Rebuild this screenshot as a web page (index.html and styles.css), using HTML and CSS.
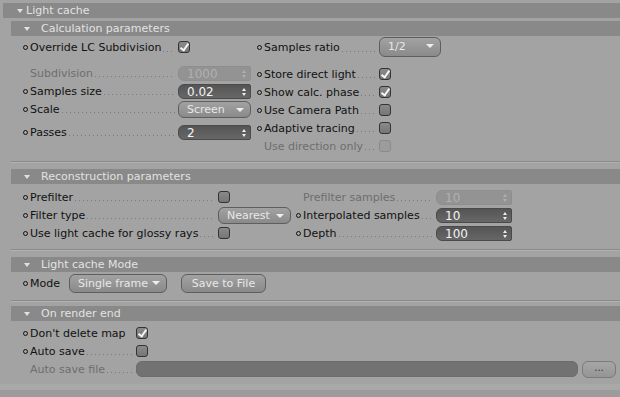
FILE: index.html
```html
<!DOCTYPE html>
<html lang="en">
<head>
    <meta charset="UTF-8">
    <title>Light cache</title>
    <link rel="stylesheet" href="styles.css">
</head>
<body>
    <div class="panel">
        <div class="group-head"><span class="tri"></span>Light cache</div>
        <div class="group-body">

            <section class="sec">
                <div class="sec-head"><span class="tri"></span>Calculation parameters</div>
                <div class="sec-body calc">
                    <div class="col calc-left">
                        <div class="row r-first"><i class="dot"></i><span class="lbl">Override LC Subdivision</span><span class="lead"></span><span class="slot"><span class="chk on"></span></span></div>
                        <div class="row r-gap off"><i class="dot"></i><span class="lbl">Subdivision</span><span class="lead"></span><span class="slot"><span class="num dis">1000<b class="spin"></b></span></span></div>
                        <div class="row"><i class="dot"></i><span class="lbl">Samples size</span><span class="lead"></span><span class="slot"><span class="num">0.02<b class="spin"></b></span></span></div>
                        <div class="row"><i class="dot"></i><span class="lbl">Scale</span><span class="lead"></span><span class="slot"><span class="drop">Screen</span></span></div>
                        <div class="row r-pass"><i class="dot"></i><span class="lbl">Passes</span><span class="lead"></span><span class="slot"><span class="num">2<b class="spin"></b></span></span></div>
                    </div>
                    <div class="col calc-right">
                        <div class="row r-first"><i class="dot"></i><span class="lbl">Samples ratio</span><span class="lead"></span><span class="slot"><span class="drop ratio">1/2</span></span></div>
                        <div class="row r-gap2"><i class="dot"></i><span class="lbl">Store direct light</span><span class="lead"></span><span class="slot"><span class="chk on"></span></span></div>
                        <div class="row"><i class="dot"></i><span class="lbl">Show calc. phase</span><span class="lead"></span><span class="slot"><span class="chk on"></span></span></div>
                        <div class="row"><i class="dot"></i><span class="lbl">Use Camera Path</span><span class="lead"></span><span class="slot"><span class="chk"></span></span></div>
                        <div class="row"><i class="dot"></i><span class="lbl">Adaptive tracing</span><span class="lead"></span><span class="slot"><span class="chk"></span></span></div>
                        <div class="row off"><i class="dot"></i><span class="lbl">Use direction only</span><span class="lead"></span><span class="slot"><span class="chk dis"></span></span></div>
                    </div>
                </div>
            </section>

            <section class="sec">
                <div class="sec-head"><span class="tri"></span>Reconstruction parameters</div>
                <div class="sec-body recon">
                    <div class="col recon-left">
                        <div class="row"><i class="dot"></i><span class="lbl">Prefilter</span><span class="lead"></span><span class="slot"><span class="chk"></span></span></div>
                        <div class="row"><i class="dot"></i><span class="lbl">Filter type</span><span class="lead"></span><span class="slot"><span class="drop">Nearest</span></span></div>
                        <div class="row"><i class="dot"></i><span class="lbl">Use light cache for glossy rays</span><span class="lead"></span><span class="slot"><span class="chk"></span></span></div>
                    </div>
                    <div class="col recon-right">
                        <div class="row off"><i class="dot"></i><span class="lbl">Prefilter samples</span><span class="lead"></span><span class="slot"><span class="num dis">10<b class="spin"></b></span></span></div>
                        <div class="row"><i class="dot"></i><span class="lbl">Interpolated samples</span><span class="lead"></span><span class="slot"><span class="num">10<b class="spin"></b></span></span></div>
                        <div class="row"><i class="dot"></i><span class="lbl">Depth</span><span class="lead"></span><span class="slot"><span class="num">100<b class="spin"></b></span></span></div>
                    </div>
                </div>
            </section>

            <section class="sec">
                <div class="sec-head"><span class="tri"></span>Light cache Mode</div>
                <div class="sec-body mode">
                    <div class="row"><i class="dot"></i><span class="lbl">Mode</span><span class="drop mode-drop">Single frame</span><span class="btn save">Save to File</span></div>
                </div>
            </section>

            <section class="sec last">
                <div class="sec-head"><span class="tri"></span>On render end</div>
                <div class="sec-body end">
                    <div class="row"><i class="dot"></i><span class="key"><span class="lbl">Don't delete map</span></span><span class="chk on"></span></div>
                    <div class="row"><i class="dot"></i><span class="key"><span class="lbl">Auto save</span><span class="lead"></span></span><span class="chk"></span></div>
                    <div class="row off"><i class="dot"></i><span class="key"><span class="lbl">Auto save file</span><span class="lead"></span></span><span class="path"></span><span class="btn dots-btn">...</span></div>
                </div>
            </section>

        </div>
    </div>
</body>
</html>
```

FILE: styles.css
```css
body {
    margin: 0;
    background-color: #9c9c9c;
    font-family: 'DejaVu Sans', Verdana, sans-serif;
    font-size: 11px;
    color: #111;
}
.panel {
    background-color: #a3a3a3;
    padding-top: 3px;
    height: 381px;
    border-bottom: 6px solid #a9a9a9;
}
.group-head, .sec-head {
    background-color: #898989;
    color: #e2e2e2;
    height: 15px;
    line-height: 15px;
    font-size: 11px;
    display: flex;
    align-items: center;
}
.group-head {
    margin-left: 3px;
    padding-left: 14px;
}
.group-head .tri {
    margin-right: 3px;
}
.sec {
    margin-left: 11px;
    border-bottom: 1px solid #8a8a8a;
    box-shadow: 0 1px 0 #b2b2b2;
    margin-top: 7px;
}
.sec:first-child {
    margin-top: 3px;
}
.sec.last {
    margin-top: 5px;
    border-bottom: none;
    box-shadow: none;
}
.sec-head {
    padding-left: 13px;
}
.sec-head .tri {
    margin-right: 11px;
}
.tri {
    width: 0;
    height: 0;
    border-left: 3px solid transparent;
    border-right: 3px solid transparent;
    border-top: 4px solid #e2e2e2;
}

/* rows */
.row {
    display: flex;
    align-items: center;
    height: 18px;
    white-space: nowrap;
}
.dot {
    width: 3px;
    height: 3px;
    border: 1px solid #111;
    border-radius: 50%;
    margin-right: 2px;
    flex: none;
}
.off .dot {
    visibility: hidden;
}
.off .lbl {
    color: #6e6e6e;
}
.lead {
    flex: 1;
    align-self: flex-end;
    height: 1px;
    margin: 0 3px 5px 2px;
    background: linear-gradient(to right, #7a7a7a 1px, transparent 1px) repeat-x;
    background-size: 4px 1px;
}
.slot {
    flex: none;
    display: flex;
    align-items: center;
}

/* controls */
.chk {
    width: 10px;
    height: 10px;
    border: 1px solid #333;
    border-radius: 3px;
    background: linear-gradient(#8a8a8a, #767676);
    flex: none;
    position: relative;
}
.chk.on::after {
    content: "";
    position: absolute;
    left: 3px;
    top: 0px;
    width: 3px;
    height: 7px;
    border-right: 2px solid #f4f4f4;
    border-bottom: 2px solid #f4f4f4;
    transform: rotate(35deg);
}
.chk.dis {
    border-color: #8a8a8a;
    background: #9c9c9c;
}
.num {
    width: 64px;
    height: 15px;
    line-height: 15px;
    padding-left: 8px;
    border-radius: 6px 2px 2px 6px;
    background: linear-gradient(#555, #676767);
    border: 1px solid #4a4a4a;
    box-sizing: border-box;
    color: #f4f4f4;
    font-size: 12px;
    position: relative;
    flex: none;
}
.num.dis {
    background: #939393;
    border-color: #8e8e8e;
    color: #b0b0b0;
}
.spin {
    position: absolute;
    right: 3px;
    top: 3px;
    width: 5px;
    height: 8px;
}
.spin::before, .spin::after {
    content: "";
    position: absolute;
    left: 0;
    border-left: 2.5px solid transparent;
    border-right: 2.5px solid transparent;
}
.spin::before {
    top: 0;
    border-bottom: 3px solid #eee;
}
.spin::after {
    bottom: 0;
    border-top: 3px solid #eee;
}
.num.dis .spin::before {
    border-bottom-color: #b0b0b0;
}
.num.dis .spin::after {
    border-top-color: #b0b0b0;
}
.drop, .btn {
    height: 17px;
    line-height: 15px;
    box-sizing: border-box;
    border: 1px solid #5e5e5e;
    border-radius: 6px;
    background: linear-gradient(#a2a2a2, #8a8a8a);
    color: #e8e8e8;
    font-size: 11px;
    padding-left: 8px;
    position: relative;
    flex: none;
}
.drop::after {
    content: "";
    position: absolute;
    right: 6px;
    top: 6px;
    border-left: 4px solid transparent;
    border-right: 4px solid transparent;
    border-top: 4px solid #eee;
}
.btn {
    text-align: center;
    padding: 0;
}

/* calculation parameters */
.sec-body.calc {
    display: flex;
    height: 125px;
}
.calc-left {
    width: 228px;
    margin-left: 12px;
}
.calc-left .slot {
    width: 73px;
}
.calc-left .drop, .calc-left .num {
    width: 73px;
}
.calc-right {
    width: 184px;
    margin-left: 6px;
}
.calc-right .slot {
    width: 62px;
}
.r-first {
    height: 20px;
    margin-top: 1px;
}
.r-gap {
    margin-top: 7px;
}
.r-gap2 {
    margin-top: 8px;
}
.r-pass {
    margin-top: 5px;
}
.ratio {
    width: 62px;
    height: 20px;
    line-height: 18px;
}

/* reconstruction parameters */
.sec-body.recon {
    display: flex;
    height: 65px;
    padding-top: 4px;
    box-sizing: border-box;
}
.recon-left {
    width: 268px;
    margin-left: 12px;
}
.recon-left .slot, .recon-left .drop {
    width: 73px;
}
.recon-right {
    width: 216px;
    margin-left: 5px;
}
.recon-right .slot, .recon-right .num {
    width: 76px;
}

/* light cache mode */
.sec-body.mode {
    height: 28px;
    padding: 1px 0 0 12px;
    box-sizing: border-box;
}
.sec-body.mode .row {
    height: 20px;
}
.mode-drop {
    width: 98px;
    height: 19px;
    line-height: 17px;
    margin-left: 9px;
}
.save {
    width: 85px;
    height: 19px;
    line-height: 17px;
    margin-left: 14px;
}

/* on render end */
.sec-body.end {
    padding: 3px 4px 0 12px;
    height: 60px;
}
.key {
    width: 106px;
    display: flex;
    align-self: stretch;
    align-items: center;
    flex: none;
}
.path {
    flex: 1;
    height: 16px;
    border-radius: 6px;
    background: #727272;
    border: 1px solid #6c6c6c;
    box-sizing: border-box;
}
.dots-btn {
    width: 34px;
    height: 17px;
    line-height: 12px;
    margin-left: 4px;
    color: #333;
    font-size: 10px;
    border-color: #7a7a7a;
    background: linear-gradient(#a6a6a6, #959595);
}
```
